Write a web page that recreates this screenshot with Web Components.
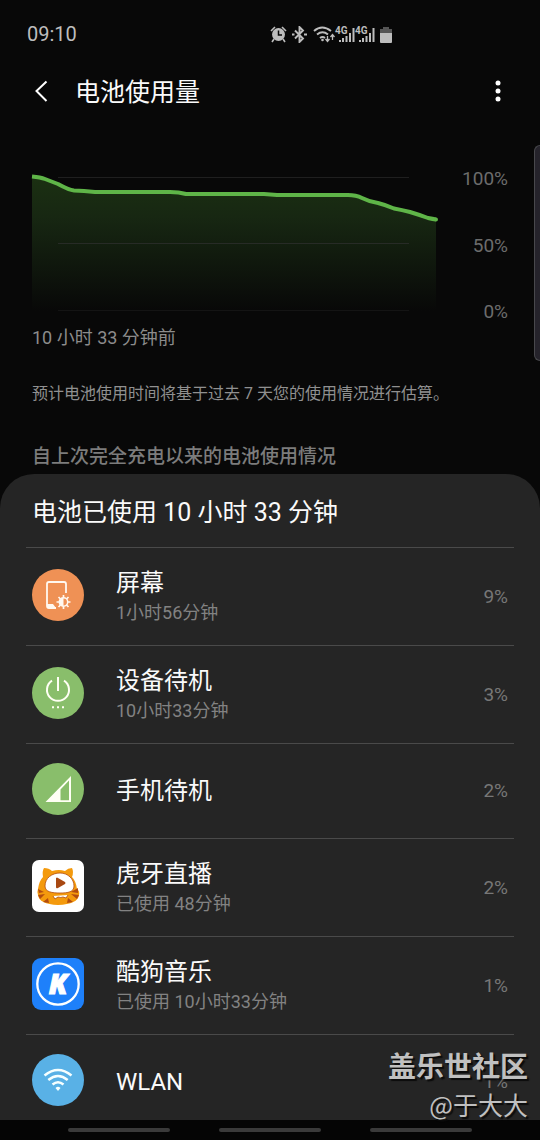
<!DOCTYPE html>
<html lang="zh-CN">
<head>
<meta charset="utf-8">
<meta name="viewport" content="width=device-width, initial-scale=1">
<title>电池使用量</title>
<style>
  html, body { margin: 0; height: 100%; background: #080808; }
  body {
    font-family: Roboto, "Noto Sans CJK SC", sans-serif;
    color: #fafafa;
    --page: #080808;
    --card: #252525;
    --muted: #8c8c8c;
    --line: #4a4a4a;
    --side: 32px;
  }
</style>
</head>
<body>
<battery-app>
  <status-bar slot="top" time="09:10"></status-bar>
  <app-header slot="top">电池使用量</app-header>
  <battery-chart since="10 小时 33 分钟前"></battery-chart>
  <info-note>预计电池使用时间将基于过去 7 天您的使用情况进行估算。</info-note>
  <section-title>自上次完全充电以来的电池使用情况</section-title>
  <usage-card heading="电池已使用 10 小时 33 分钟">
    <usage-row name="屏幕" detail="1小时56分钟" percent="9%">
      <svg viewBox="0 0 52 52" aria-hidden="true"><circle cx="26" cy="26" r="26" fill="#ef9155"/><path d="M34 24V15q0-2-2-2H17q-2 0-2 2v22q0 2 2 2h7" fill="none" stroke="#fff8f0" stroke-width="1.8"/><path d="M15 35h6l3 4h-7q-2 0-2-2z" fill="#fff8f0"/><circle cx="31.500" cy="33" r="4.200" fill="none" stroke="#fff8f0" stroke-width="1.500"/><path d="M31.500 28.800a4.200 4.200 0 0 0 0 8.400z" fill="#fff8f0"/><path d="M31.500 26v2.500M31.500 37.500V40M24.500 33H27M36 33h2.500M26.500 28l2 2M34.500 36l2 2M36.500 28l-2 2M28.500 36l-2 2" stroke="#fff8f0" stroke-width="1.700"/></svg>
    </usage-row>
    <usage-row name="设备待机" detail="10小时33分钟" percent="3%">
      <svg viewBox="0 0 52 52" aria-hidden="true"><circle cx="26" cy="26" r="26" fill="#89be6b"/><path d="M26 10v14M20 13.600A11 11 0 1 0 32 13.600" fill="none" stroke="#fffff4" stroke-width="2"/><path d="M20 39.300h2v2h-2zM25 39.300h2v2h-2zM30 39.300h2v2h-2z" fill="#fffff4"/></svg>
    </usage-row>
    <usage-row name="手机待机" percent="2%">
      <svg viewBox="0 0 52 52" aria-hidden="true"><circle cx="26" cy="26" r="26" fill="#89be6b"/><path d="M39 13v26H13.500zM37 17.500l-8.500 9V37.200H37z" fill="#fffff4" fill-rule="evenodd"/></svg>
    </usage-row>
    <usage-row name="虎牙直播" detail="已使用 48分钟" percent="2%">
      <svg viewBox="0 0 52 52" aria-hidden="true"><rect width="52" height="52" rx="7" fill="#fff"/><path d="M11 17Q10 11 12 8q5 0 8 3 7-2 13 0 3-3 7-3 2 4 0 9 4 4 5 12 3 2 2 6-1 9-21 10Q7 44 6 35q-1-4 0-6 1-8 5-12z" fill="#f49a0d"/><path d="M6 29l6 3-5 1zM6 35l7-1-5 5zM11 42l5-4 1 5zM46 28l-7 4 7 1zM47 35l-8-1 6 5zM41 42l-5-4-1 5z" fill="#b24c10"/><path d="M13 26c0-8 7-13 15-13 8 0 14 6 14 13 0 6-6 7-14 7s-15-1-15-7z" fill="#fff" stroke="#b24c10" stroke-width=".8"/><path d="M24 18q1-1 2 0l7 4q1 1 0 2l-7 4q-2 1-2-1z" fill="#a84912"/><path d="M21 36l2 3 3-2q3 1 5 0l3 1 2-3" fill="#fff" stroke="#a84912" stroke-width=".8"/></svg>
    </usage-row>
    <usage-row name="酷狗音乐" detail="已使用 10小时33分钟" percent="1%">
      <svg viewBox="0 0 52 52" aria-hidden="true"><rect width="52" height="52" rx="9" fill="#1e80fa"/><circle cx="26" cy="26" r="20.700" fill="none" stroke="#fff" stroke-width="2.300"/><text x="26" y="36" text-anchor="middle" font-family="Open Sans, sans-serif" font-weight="800" font-style="italic" font-size="28" fill="#fff" stroke="#fff" stroke-width="1">K</text></svg>
    </usage-row>
    <usage-row name="WLAN" percent="1%">
      <svg viewBox="0 0 52 52" aria-hidden="true"><circle cx="26" cy="26" r="26" fill="#59b1e6"/><path d="M12.500 21.500q13.500-11 27 0M16.300 26q9.700-8 19.400 0M20.500 30.500q5.500-4.500 11 0" fill="none" stroke="#f6ffff" stroke-width="2.500"/><path d="M23.500 34q2.500-2.500 5 0L26 37z" fill="#f6ffff"/></svg>
    </usage-row>
  </usage-card>
  <edge-handle slot="overlay"></edge-handle>
  <source-mark slot="overlay" author="@于大大">盖乐世社区</source-mark>
  <nav-bar slot="bottom"></nav-bar>
</battery-app>

<script>
class Base extends HTMLElement {
  connectedCallback() {
    if (this.shadowRoot) return;
    this.attachShadow({ mode: 'open' }).innerHTML = this.render();
  }
  attr(name) { return this.getAttribute(name) || ''; }
}

customElements.define('battery-app', class extends Base {
  render() {
    return `<style>
      :host { display: flex; flex-direction: column; height: 100vh; position: relative; overflow: hidden; background: var(--page); }
      main { flex: 1; min-height: 0; overflow-y: auto; scrollbar-width: none; }
    </style>
    <slot name="top"></slot><main><slot></slot></main><slot name="bottom"></slot><slot name="overlay"></slot>`;
  }
});

customElements.define('status-bar', class extends Base {
  render() {
    const signal = `<div class="sig"><svg width="20" height="17" viewBox="0 0 20 17"><path d="M5 16v-2M8 16v-4M11.500 16v-6M15 16V7M18.500 16V2" stroke="#bdbdbd" stroke-width="2"/></svg><span>4G</span></div>`;
    return `<style>
      :host { display: flex; align-items: center; height: 68px; padding: 0 27px; font-size: 20px; color: #bdbdbd; position: relative; }
      .icons { position: absolute; left: 50%; display: flex; align-items: center; gap: 5px; }
      .net { display: flex; }
      .sig { position: relative; display: flex; }
      .sig span { position: absolute; left: 0; top: 0; font: bold 10px/9px Roboto, sans-serif; }
      svg { display: block; }
    </style>
    <time>${this.attr('time')}</time>
    <div class="icons">
      <svg width="17" height="17" viewBox="0 0 17 17"><circle cx="8.500" cy="8.500" r="6.500" fill="#bdbdbd"/><path d="M8.500 4.500v4.500H12" fill="none" stroke="#080808" stroke-width="1.500"/><path d="M1 5l4-4M12 1l4 4M4 13l-2 3M13 13l2 3" stroke="#bdbdbd" stroke-width="1.600"/></svg>
      <svg width="15" height="17" viewBox="0 0 15 17"><path d="M3 4.500l8 8L7.500 16V1L11 4.500l-8 8" fill="none" stroke="#bdbdbd" stroke-width="1.900"/><path d="M0 7.500h2.500v2H0zM12 7.500h3v2h-3z" fill="#bdbdbd"/></svg>
      <div class="net">
        <svg width="23" height="17" viewBox="0 0 23 17"><path d="M2 5q8-7 17 0M5 8.500q5.500-4.500 11 0M8 12q2.500-2 5 0" fill="none" stroke="#bdbdbd" stroke-width="1.900"/><circle cx="10.500" cy="14" r="1.300" fill="#bdbdbd"/><path d="M15.500 10v5M13.500 13l2 2.500 2-2.500M20.500 14v-5M18.500 11l2-2.500 2 2.500" fill="none" stroke="#bdbdbd" stroke-width="1.300"/></svg>
        ${signal}${signal}
      </div>
      <svg width="12" height="17" viewBox="0 0 12 17"><path d="M3 1h6v2h3v5H0V3h3z" fill="#555"/><path d="M0 7h12v9q0 1-1 1H1q-1 0-1-1z" fill="#bdbdbd"/></svg>
    </div>`;
  }
});

customElements.define('app-header', class extends Base {
  render() {
    return `<style>
      :host { display: flex; align-items: center; height: 48px; padding: 0 27px; }
      button { display: flex; padding: 0; border: 0; background: none; cursor: pointer; }
      h1 { flex: 1; margin: 0; padding-top: 2px; font-size: 25px; line-height: 32px; font-weight: 400; }
      .back { width: 48px; }
    </style>
    <button class="back" aria-label="返回"><svg width="28" height="28" viewBox="0 0 28 28"><path d="M19.500 3.500L9.500 13l10 10" fill="none" stroke="#fff" stroke-width="2"/></svg></button>
    <h1><slot></slot></h1>
    <button aria-label="更多选项"><svg width="30" height="28" viewBox="0 0 30 28"><circle cx="15" cy="5" r="2.500" fill="#fff"/><circle cx="15" cy="13" r="2.500" fill="#fff"/><circle cx="15" cy="21" r="2.500" fill="#fff"/></svg></button>`;
  }
});

customElements.define('battery-chart', class extends Base {
  render() {
    const curve = 'M0 8.500C5 9 9 9.500 13 11L26 16Q37 22 42 22.500L52 23 63 24H138Q147 24 154 26H232L245 27H316Q324 27 330 30 338 34 346 35 354 37 362 40.500 370 42 378 44 388 47 396 50 401 51 404 51.500';
    return `<style>
      :host { display: block; padding: 52px var(--side) 0; }
      .plot { display: flex; height: 155px; }
      svg { flex: 1; min-width: 0; height: 100%; overflow: visible; }
      .scale { width: 72px; display: flex; flex-direction: column; justify-content: space-between; text-align: right; font-size: 19px; line-height: 22px; color: #6c6c6c; }
      p { margin: 3px 0 0; font-size: 18px; line-height: 24px; color: var(--muted); }
    </style>
    <div class="plot">
      <svg viewBox="0 0 404 155" preserveAspectRatio="none" role="img" aria-label="电池电量">
        <defs><linearGradient id="g" gradientUnits="userSpaceOnUse" x1="0" y1="9" x2="0" y2="143"><stop offset="0" stop-color="#1b3012"/><stop offset=".3" stop-color="#172712"/><stop offset="1" stop-color="#080808"/></linearGradient></defs>
        <path d="${curve}V143H0z" fill="url(#g)"/>
        <path d="M26 9.500H377" stroke="#1f1f1f"/><path d="M26 75.500H377" stroke="#272b26"/><path d="M26 142.500H377" stroke="#141414"/>
        <path d="${curve}" fill="none" stroke="#5fb548" stroke-width="4" stroke-linejoin="round"/>
        <circle cx="404" cy="51.500" r="2" fill="#5fb548"/>
      </svg>
      <div class="scale"><span>100%</span><span>50%</span><span>0%</span></div>
    </div>
    <p>${this.attr('since')}</p>`;
  }
});

customElements.define('info-note', class extends Base {
  render() {
    return `<style>
      :host { display: block; padding: 32px var(--side) 0; font-size: 16px; line-height: 24px; color: #909090; }
    </style><slot></slot>`;
  }
});

customElements.define('section-title', class extends Base {
  render() {
    return `<style>
      :host { display: block; padding: 39px var(--side) 5px; }
      h2 { margin: 0; font-size: 19px; line-height: 24px; font-weight: 500; color: #7c7c7c; }
    </style><h2><slot></slot></h2>`;
  }
});

customElements.define('usage-card', class extends Base {
  render() {
    return `<style>
      :host { display: block; padding: 0 26px; background: var(--card); border-radius: 34px 34px 0 0; }
      h3 { margin: 0; padding: 23px 6px 18px; font-size: 25px; line-height: 32px; font-weight: 400; }
    </style><h3>${this.attr('heading')}</h3><div role="list"><slot></slot></div>`;
  }
});

customElements.define('usage-row', class extends Base {
  render() {
    this.setAttribute('role', 'listitem');
    const detail = this.attr('detail');
    return `<style>
      :host { display: flex; align-items: center; box-sizing: border-box; min-height: 95px; padding: 0 6px; border-top: 1px solid var(--line); }
      :host([detail]) { min-height: 98px; }
      ::slotted(svg) { width: 52px; height: 52px; flex: none; margin-bottom: 4px; }
      .text { flex: 1; margin-left: 32px; }
      .name { font-size: 24px; line-height: 32px; }
      .detail { font-size: 18px; line-height: 28px; color: #828282; }
      .percent { font-size: 19px; line-height: 24px; color: #777; }
    </style>
    <slot></slot>
    <div class="text"><div class="name">${this.attr('name')}</div>${detail ? `<div class="detail">${detail}</div>` : ''}</div>
    <div class="percent">${this.attr('percent')}</div>`;
  }
});

customElements.define('edge-handle', class extends Base {
  render() {
    return `<style>
      :host { position: absolute; right: 0; top: 145px; width: 6px; height: 216px; box-sizing: border-box; border: 1px solid #48484c; border-right: 0; border-radius: 8px 0 0 8px; background: #25232b; }
    </style>`;
  }
});

customElements.define('source-mark', class extends Base {
  render() {
    return `<style>
      :host { position: absolute; right: 12px; bottom: 19px; text-align: right; color: #c0c0c0; text-shadow: 2px 2px 1px #0c0c0c; pointer-events: none; }
      .site { font-size: 28px; line-height: 38px; font-weight: 700; }
      .author { font-size: 25px; line-height: 34px; font-family: "Noto Sans CJK SC", sans-serif; }
    </style><div class="site"><slot></slot></div><div class="author">${this.attr('author')}</div>`;
  }
});

customElements.define('nav-bar', class extends Base {
  render() {
    return `<style>
      :host { display: block; background: #050505; }
      nav { display: flex; justify-content: space-between; padding: 0 68px; }
      button { width: 102px; height: 20px; padding: 0; border: 0; background: none; display: flex; align-items: center; }
      button::before { content: ""; flex: 1; height: 4px; border-radius: 2px; background: #3a3a3a; }
    </style><nav><button aria-label="最近任务"></button><button aria-label="主屏幕"></button><button aria-label="返回上一页"></button></nav>`;
  }
});
</script>
</body>
</html>
